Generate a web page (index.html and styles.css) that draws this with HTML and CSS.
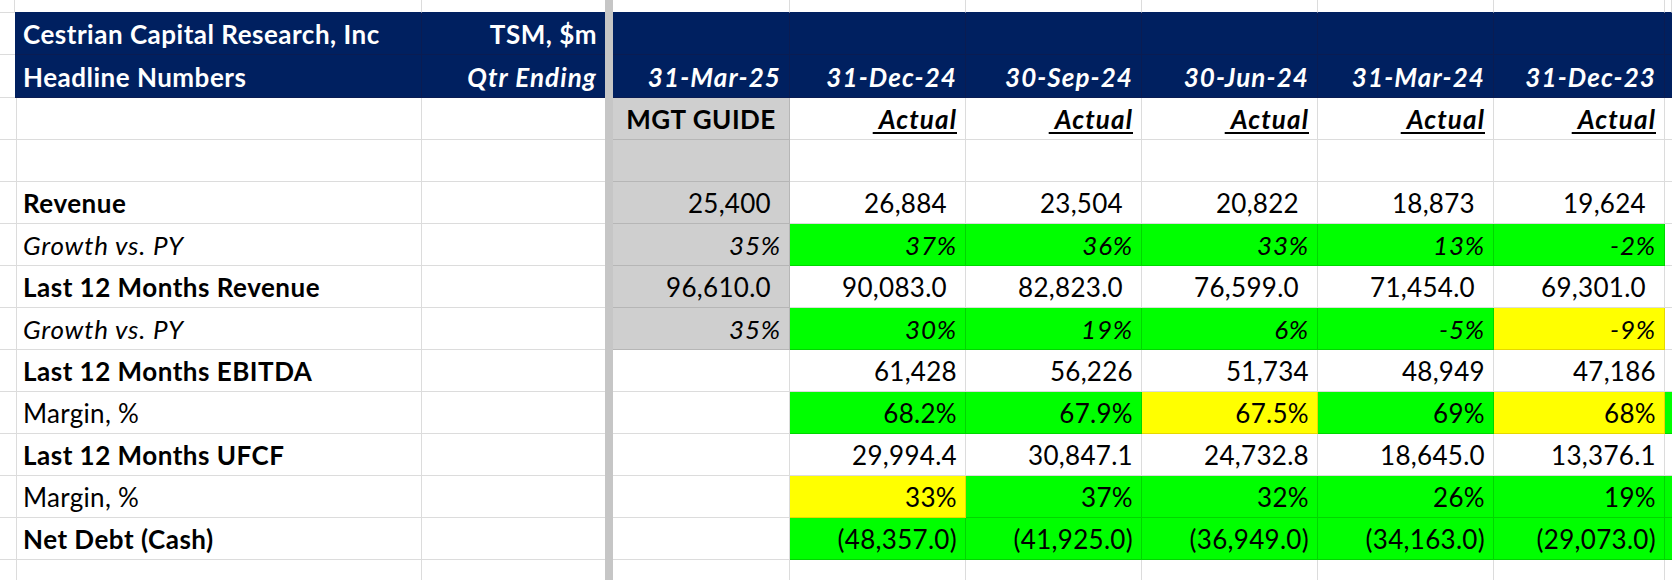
FILE: index.html
```html
<!DOCTYPE html>
<html lang="en">
<head>
<meta charset="utf-8">
<title>TSM Headline Numbers</title>
<link rel="stylesheet" href="styles.css">
</head>
<body>
<div class="sheet">
  <div class="freeze"></div>

  <!-- row 0 (partial) -->
  <div class="c t0"></div><div class="c t0 tn"></div><div class="c t0 tn nr"></div><div class="c t0 tn"></div><div class="c t0 tn"></div><div class="c t0 tn"></div><div class="c t0 tn"></div><div class="c t0 tn"></div><div class="c t0 tn"></div><div class="c t0 tn"></div>

  <!-- row 1 -->
  <div class="c"></div>
  <div class="c nv b">Cestrian Capital Research, Inc</div>
  <div class="c nv b r nr">TSM, $m</div>
  <div class="c nv"></div><div class="c nv"></div><div class="c nv"></div><div class="c nv"></div><div class="c nv"></div><div class="c nv"></div><div class="c nv"></div>

  <!-- row 2 -->
  <div class="c"></div>
  <div class="c nv b">Headline Numbers</div>
  <div class="c nv b i r nr">Qtr Ending</div>
  <div class="c nv b i r">31-Mar-25</div>
  <div class="c nv b i r">31-Dec-24</div>
  <div class="c nv b i r">30-Sep-24</div>
  <div class="c nv b i r">30-Jun-24</div>
  <div class="c nv b i r">31-Mar-24</div>
  <div class="c nv b i r">31-Dec-23</div>
  <div class="c nv"></div>

  <!-- row 3 -->
  <div class="c"></div><div class="c"></div><div class="c nr"></div>
  <div class="c gy b ctr">MGT GUIDE</div>
  <div class="c b i r"><span class="u">&nbsp;Actual</span></div>
  <div class="c b i r"><span class="u">&nbsp;Actual</span></div>
  <div class="c b i r"><span class="u">&nbsp;Actual</span></div>
  <div class="c b i r"><span class="u">&nbsp;Actual</span></div>
  <div class="c b i r"><span class="u">&nbsp;Actual</span></div>
  <div class="c"></div>

  <!-- row 4 -->
  <div class="c"></div><div class="c"></div><div class="c nr"></div>
  <div class="c gy"></div>
  <div class="c"></div><div class="c"></div><div class="c"></div><div class="c"></div><div class="c"></div><div class="c"></div>

  <!-- row 5 -->
  <div class="c"></div>
  <div class="c b">Revenue</div>
  <div class="c nr"></div>
  <div class="c gy r sp">25,400</div>
  <div class="c r sp">26,884</div>
  <div class="c r sp">23,504</div>
  <div class="c r sp">20,822</div>
  <div class="c r sp">18,873</div>
  <div class="c r sp">19,624</div>
  <div class="c"></div>

  <!-- row 6 -->
  <div class="c"></div>
  <div class="c i">Growth vs. PY</div>
  <div class="c nr"></div>
  <div class="c gy i r">35%</div>
  <div class="c gn i r">37%</div>
  <div class="c gn i r">36%</div>
  <div class="c gn i r">33%</div>
  <div class="c gn i r">13%</div>
  <div class="c gn i r">-2%</div>
  <div class="c"></div>

  <!-- row 7 -->
  <div class="c"></div>
  <div class="c b">Last 12 Months Revenue</div>
  <div class="c nr"></div>
  <div class="c gy r sp">96,610.0</div>
  <div class="c r sp">90,083.0</div>
  <div class="c r sp">82,823.0</div>
  <div class="c r sp">76,599.0</div>
  <div class="c r sp">71,454.0</div>
  <div class="c r sp">69,301.0</div>
  <div class="c"></div>

  <!-- row 8 -->
  <div class="c"></div>
  <div class="c i">Growth vs. PY</div>
  <div class="c nr"></div>
  <div class="c gy i r">35%</div>
  <div class="c gn i r">30%</div>
  <div class="c gn i r">19%</div>
  <div class="c gn i r">6%</div>
  <div class="c gn i r">-5%</div>
  <div class="c yl i r">-9%</div>
  <div class="c"></div>

  <!-- row 9 -->
  <div class="c"></div>
  <div class="c b">Last 12 Months EBITDA</div>
  <div class="c nr"></div>
  <div class="c"></div>
  <div class="c r">61,428</div>
  <div class="c r">56,226</div>
  <div class="c r">51,734</div>
  <div class="c r">48,949</div>
  <div class="c r">47,186</div>
  <div class="c"></div>

  <!-- row 10 -->
  <div class="c"></div>
  <div class="c">Margin, %</div>
  <div class="c nr"></div>
  <div class="c"></div>
  <div class="c gn r">68.2%</div>
  <div class="c gn r">67.9%</div>
  <div class="c yl r">67.5%</div>
  <div class="c gn r">69%</div>
  <div class="c yl r">68%</div>
  <div class="c gn"></div>

  <!-- row 11 -->
  <div class="c"></div>
  <div class="c b">Last 12 Months UFCF</div>
  <div class="c nr"></div>
  <div class="c"></div>
  <div class="c r">29,994.4</div>
  <div class="c r">30,847.1</div>
  <div class="c r">24,732.8</div>
  <div class="c r">18,645.0</div>
  <div class="c r">13,376.1</div>
  <div class="c"></div>

  <!-- row 12 -->
  <div class="c"></div>
  <div class="c">Margin, %</div>
  <div class="c nr"></div>
  <div class="c"></div>
  <div class="c yl r">33%</div>
  <div class="c gn r">37%</div>
  <div class="c gn r">32%</div>
  <div class="c gn r">26%</div>
  <div class="c gn r">19%</div>
  <div class="c gn"></div>

  <!-- row 13 -->
  <div class="c"></div>
  <div class="c b">Net Debt (Cash)</div>
  <div class="c nr"></div>
  <div class="c"></div>
  <div class="c gn r">(48,357.0)</div>
  <div class="c gn r">(41,925.0)</div>
  <div class="c gn r">(36,949.0)</div>
  <div class="c gn r">(34,163.0)</div>
  <div class="c gn r">(29,073.0)</div>
  <div class="c gn"></div>

  <!-- row 14 (partial) -->
  <div class="c nb"></div><div class="c nb"></div><div class="c nb nr"></div><div class="c nb"></div><div class="c nb"></div><div class="c nb"></div><div class="c nb"></div><div class="c nb"></div><div class="c nb"></div><div class="c nb"></div>
</div>
</body>
</html>
```

FILE: styles.css
```css
html, body {
  margin: 0;
  padding: 0;
  background: #ffffff;
  overflow: hidden;
}

.sheet {
  display: grid;
  grid-template-columns: 15px 407px 183px 8px 177px 176px 176px 176px 176px 171px 7px;
  grid-template-rows: 13px 42px 43px repeat(11, 42px) 20px;
  width: 1672px;
  height: 580px;
  font-family: "Lato", "Liberation Sans", sans-serif;
  font-size: 26px;
  letter-spacing: 0.3px;
  color: #000000;
}

.freeze {
  grid-column: 4;
  grid-row: 1 / -1;
  background: #c6c6c6;
}

.c {
  box-sizing: border-box;
  display: flex;
  align-items: flex-end;
  justify-content: flex-start;
  padding: 0 8px 7px 8px;
  line-height: 1;
  white-space: nowrap;
  overflow: hidden;
  border-right: 1px solid #dcdcdc;
  border-bottom: 1px solid #dcdcdc;
}

.t0 { padding: 0; }
.t0.tn { border-bottom-color: #002060; }

.nr { border-right: none; }
.nb { border-bottom: none; }

.r { justify-content: flex-end; }
.ctr { justify-content: center; }
.sp { padding-right: 18px; }

.b { font-weight: 700; letter-spacing: 0.5px; }
.i { font-style: italic; letter-spacing: 0.8px; }
.b.i { letter-spacing: 1.1px; }
.u {
  text-decoration: underline;
  text-decoration-thickness: 2px;
  text-underline-offset: 3px;
}

.nv {
  background: #002060;
  color: #ffffff;
  border-right-color: #0a1c52;
  border-bottom-color: #0a1c52;
}

.gy {
  background: #cfcfcf;
  border-right-color: #b6b6b6;
  border-bottom-color: #b6b6b6;
}

.gn {
  background: #00ff00;
  border-right-color: #00d600;
  border-bottom-color: #00d600;
}

.yl {
  background: #ffff00;
  border-right-color: #e6d800;
  border-bottom-color: #e6d800;
}
```
